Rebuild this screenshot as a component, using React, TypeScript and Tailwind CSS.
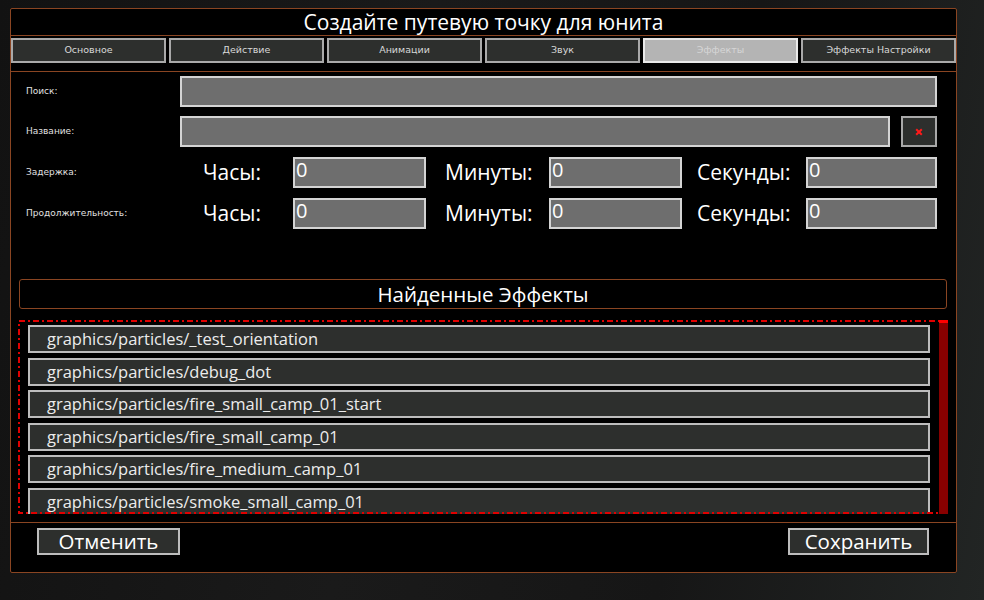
const tabs = ["Основное", "Действие", "Анимации", "Звук", "Эффекты", "Эффекты Настройки"];

const effects = [
  "graphics/particles/_test_orientation",
  "graphics/particles/debug_dot",
  "graphics/particles/fire_small_camp_01_start",
  "graphics/particles/fire_small_camp_01",
  "graphics/particles/fire_medium_camp_01",
  "graphics/particles/smoke_small_camp_01",
];

const sans = "font-['Open_Sans',sans-serif]";
const small = "font-['DejaVu_Sans',sans-serif]";

function Field({ w, value }: { w: string; value?: string }) {
  return (
    <div
      className={`${w} h-[31px] bg-[#6e6e6e] border-2 border-[#d4d4d4] text-[20px] leading-[21px] text-white pl-[1px] ${sans}`}
    >
      {value}
    </div>
  );
}

function TimeRow({ label }: { label: string }) {
  return (
    <div className="flex items-center h-[31px]">
      <div className={`w-[169px] pl-[15px] text-[9px] text-[#e0e0e0] ${small}`}>{label}</div>
      <div className={`w-[113px] pl-[23px] text-[21px] text-white ${sans}`}>Часы:</div>
      <Field w="w-[133px]" value="0" />
      <div className={`w-[123px] pl-[19px] text-[21px] text-white ${sans}`}>Минуты:</div>
      <Field w="w-[133px]" value="0" />
      <div className={`w-[124px] pl-[15px] text-[21px] text-white ${sans}`}>Секунды:</div>
      <Field w="w-[131px]" value="0" />
    </div>
  );
}

export default function App() {
  return (
    <div className="w-[984px] h-[600px] overflow-hidden bg-[linear-gradient(100deg,#121212_0%,#1a1a1a_40%,#161616_70%,#222524_100%)] pl-[10px] pt-[8px]">
      <div className="w-[947px] h-[565px] bg-black border border-[#8a4522] rounded-[2px] flex flex-col">
        <div className={`h-[27px] border-b border-[#8a4522] text-center text-[21px] leading-[27px] text-white ${sans}`}>
          Создайте путевую точку для юнита
        </div>
        <div className="grid grid-cols-6 gap-[3px] mt-[2px]">
          {tabs.map((t) => {
            const active = t === "Эффекты";
            return (
              <div
                key={t}
                className={`h-[25px] border-2 flex items-center justify-center text-[9.5px] ${small} ${
                  active
                    ? "bg-[#b4b4b4] border-[#e8e8e8] text-[#d6d6d6]"
                    : "bg-[#2d2f2d] border-[#a9a9a9] text-[#d8d8d8]"
                }`}
              >
                {t}
              </div>
            );
          })}
        </div>
        <div className="mt-[8px] border-t border-b border-[#8a4522] h-[452px] flex flex-col pt-[4px]">
          <div className="flex items-center h-[31px]">
            <div className={`w-[169px] pl-[15px] text-[9px] text-[#e0e0e0] ${small}`}>Поиск:</div>
            <Field w="w-[757px]" />
          </div>
          <div className="flex items-center h-[31px] mt-[9px]">
            <div className={`w-[169px] pl-[15px] text-[9px] text-[#e0e0e0] ${small}`}>Название:</div>
            <Field w="w-[710px]" />
            <div className="ml-[11px] w-[36px] h-[31px] bg-[#2d2f2d] border-2 border-[#a9a9a9] flex items-center justify-center">
              <svg width="8" height="8" viewBox="0 0 8 8">
                <path d="M1.2 1.2 L6.8 6.8 M6.8 1.2 L1.2 6.8" stroke="#ff1a1a" strokeWidth="2" />
              </svg>
            </div>
          </div>
          <div className="mt-[10px]">
            <TimeRow label="Задержка:" />
          </div>
          <div className="mt-[10px]">
            <TimeRow label="Продолжительность:" />
          </div>
          <div
            className={`mt-[50px] ml-[8px] w-[928px] h-[30px] border border-[#8a4522] rounded-[3px] text-center text-[20.5px] leading-[28px] text-white ${sans}`}
          >
            Найденные Эффекты
          </div>
          <div className="relative mt-[11px] ml-[7px] w-[930px] h-[194px] overflow-hidden">
            <svg className="absolute inset-0" width="930" height="194">
              <rect
                x="1"
                y="1"
                width="928"
                height="192"
                fill="none"
                stroke="#e00000"
                strokeWidth="2"
                strokeDasharray="6 3 2 3"
              />
            </svg>
            <div className="flex flex-col gap-[4.5px] pt-[5px] pl-[10px]">
              {effects.map((e) => (
                <div
                  key={e}
                  className={`w-[902px] h-[28px] shrink-0 bg-[#2d2f2d] border-2 border-[#bdbdbd] pl-[17px] text-[16.5px] leading-[23px] text-[#ececec] ${sans}`}
                >
                  {e}
                </div>
              ))}
            </div>
            <div className="absolute top-0 right-0 w-[9px] h-full bg-[#880000]">
              <div className="h-[3px] bg-[#ff0000]" />
            </div>
          </div>
        </div>
        <div className="flex justify-between pt-[5px] pl-[26px] pr-[27px]">
          <div
            className={`w-[143px] h-[27px] bg-[#2d2f2d] border-2 border-[#bdbdbd] flex items-center justify-center text-[20.5px] text-white ${sans}`}
          >
            Отменить
          </div>
          <div
            className={`w-[141px] h-[27px] bg-[#2d2f2d] border-2 border-[#bdbdbd] flex items-center justify-center text-[20.5px] text-white ${sans}`}
          >
            Сохранить
          </div>
        </div>
      </div>
    </div>
  );
}
